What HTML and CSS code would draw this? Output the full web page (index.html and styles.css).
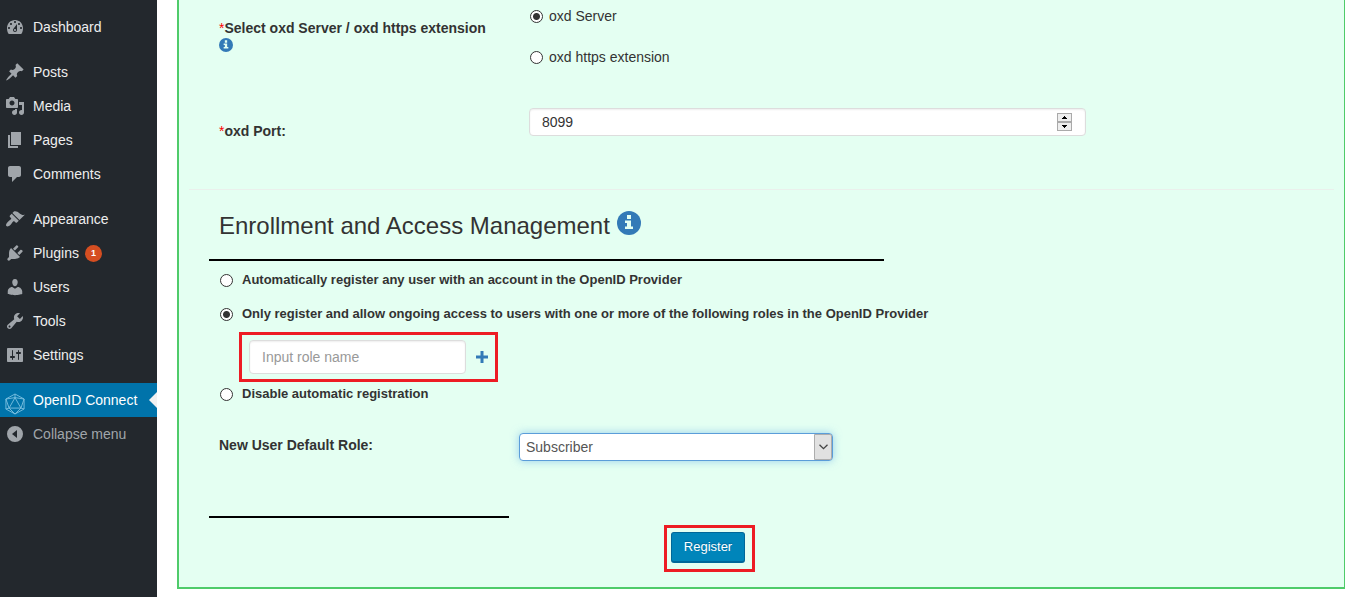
FILE: index.html
```html
<!DOCTYPE html>
<html lang="en">
<head>
<meta charset="utf-8">
<title>OpenID Connect</title>
<link rel="stylesheet" href="styles.css">
</head>
<body>
<svg class="defs" width="0" height="0" aria-hidden="true">
  <symbol id="info" viewBox="0 0 24 24">
    <circle cx="12" cy="12" r="12" fill="#337ab7"/>
    <path fill="#e4fff2" d="M10 4h4v4h-4zM8 9.500h6v6h2V18H8v-2.500h2V12H8z"/>
  </symbol>
</svg>
<div class="layout">
  <nav class="sidebar" aria-label="Admin menu">
    <ul class="menu">
      <li><a class="item" href="#"><svg class="icon" viewBox="0 0 20 20"><path d="M3.760 17h12.480c1.340-1.630 1.760-3.730 1.760-6 0-4.410-3.580-8-8-8s-8 3.590-8 8c0 2.270.42 4.370 1.760 6zM10 4c.55 0 1 .45 1 1s-.45 1-1 1-1-.45-1-1 .45-1 1-1zM6 6c.55 0 1 .45 1 1s-.45 1-1 1-1-.45-1-1 .45-1 1-1zm8 0c.55 0 1 .45 1 1s-.45 1-1 1-1-.45-1-1 .45-1 1-1zm-5.370 5.550L12 7v6c0 1.100-.9 2-2 2s-2-.9-2-2c0-.57.24-1.080.63-1.450zM4 10c.55 0 1 .45 1 1s-.45 1-1 1-1-.45-1-1 .45-1 1-1zm12 0c.55 0 1 .45 1 1s-.45 1-1 1-1-.45-1-1 .45-1 1-1zm-5 3c0-.55-.45-1-1-1s-1 .45-1 1 .45 1 1 1 1-.45 1-1z"/></svg>Dashboard</a></li>
      <li class="group"><a class="item" href="#"><svg class="icon" viewBox="0 0 20 20"><path d="M10.440 3.020l1.820-1.820 6.360 6.350-1.830 1.820c-1.050-.68-2.480-.57-3.410.36l-.75.75c-.92.93-1.040 2.350-.35 3.410l-1.830 1.820-2.410-2.410-2.800 2.790c-.42.42-3.380 2.710-3.800 2.290s1.860-3.390 2.280-3.810l2.790-2.790L4.100 9.360l1.830-1.820c1.050.69 2.480.57 3.400-.36l.75-.75c.93-.92 1.050-2.350.36-3.410z"/></svg>Posts</a></li>
      <li><a class="item" href="#"><svg class="icon" viewBox="0 0 20 20"><path d="M13 11V4c0-.55-.45-1-1-1h-1.670L9 1H5L3.670 3H2c-.55 0-1 .45-1 1v7c0 .55.45 1 1 1h10c.55 0 1-.45 1-1zM7 4.500c1.380 0 2.500 1.120 2.500 2.500S8.380 9.500 7 9.500 4.500 8.380 4.500 7 5.620 4.500 7 4.500zM14 6h5v10.500c0 1.380-1.120 2.500-2.500 2.500S14 17.880 14 16.500s1.120-2.500 2.500-2.500c.17 0 .34.02.5.05V9h-3V6zm-4 8.050V13h2v3.500c0 1.380-1.120 2.500-2.500 2.500S7 17.880 7 16.500 8.120 14 9.500 14c.17 0 .34.02.5.05z"/></svg>Media</a></li>
      <li><a class="item" href="#"><svg class="icon" viewBox="0 0 20 20"><path d="M6 15V2h10v13H6zm-1 1h8v2H3V5h2v11z"/></svg>Pages</a></li>
      <li><a class="item" href="#"><svg class="icon" viewBox="0 0 20 20"><path d="M5 2h9c1.100 0 2 .9 2 2v7c0 1.100-.9 2-2 2h-2l-5 5v-5H5c-1.100 0-2-.9-2-2V4c0-1.100.9-2 2-2z"/></svg>Comments</a></li>
      <li class="group"><a class="item" href="#"><svg class="icon" viewBox="0 0 20 20"><path d="M14.480 11.060L7.410 3.990l1.500-1.500c.5-.56 2.300-.47 3.510.32 1.210.8 1.430 1.280 2.910 2.100 1.180.64 2.450 1.260 4.450.85zm-.71.71L6.700 4.700 4.930 6.470c-.39.39-.39 1.020 0 1.410l1.060 1.060c.39.39.39 1.030 0 1.420-.6.6-1.430 1.110-2.210 1.690-.35.26-.7.53-1.010.84C1.430 14.230.4 16.080 1.400 17.070c.99 1 2.840-.03 4.180-1.360.31-.31.58-.66.85-1.020.57-.78 1.080-1.610 1.690-2.210.39-.39 1.020-.39 1.410 0l1.060 1.060c.39.39 1.020.39 1.410 0z"/></svg>Appearance</a></li>
      <li><a class="item" href="#"><svg class="icon" viewBox="0 0 20 20"><path d="M13.110 4.360L9.870 7.600 8 5.730l3.240-3.240c.35-.34 1.050-.2 1.560.32.52.51.66 1.210.31 1.550zm-8 1.770l.91-1.120 9.010 9.010-1.190.84c-.71.71-2.630 1.160-3.820 1.160H6.140L4.900 17.260c-.59.59-1.540.59-2.120 0-.59-.58-.59-1.530 0-2.120l1.240-1.240v-3.880c0-1.130.4-3.190 1.090-3.890zm7.260 3.970l3.240-3.240c.34-.35 1.040-.21 1.550.31.52.51.66 1.210.31 1.550l-3.240 3.250z"/></svg>Plugins<span class="count">1</span></a></li>
      <li><a class="item" href="#"><svg class="icon" viewBox="0 0 20 20"><path d="M10 9.250c-2.270 0-2.730-3.440-2.730-3.440C7 4.020 7.820 2 9.970 2c2.160 0 2.980 2.020 2.710 3.810 0 0-.41 3.440-2.680 3.440zm0 2.570L12.720 10c2.390 0 4.520 2.330 4.520 4.530v2.490s-3.650 1.130-7.240 1.130c-3.650 0-7.240-1.130-7.240-1.130v-2.490c0-2.250 1.940-4.480 4.470-4.480z"/></svg>Users</a></li>
      <li><a class="item" href="#"><svg class="icon" viewBox="0 0 20 20"><path d="M16.680 9.770c-1.340 1.340-3.300 1.670-4.950.99l-5.410 6.520c-.99.99-2.590.99-3.580 0s-.99-2.590 0-3.570l6.520-5.420c-.68-1.650-.35-3.610.99-4.950 1.280-1.280 3.120-1.620 4.720-1.060l-2.890 2.890 2.820 2.820 2.860-2.870c.53 1.580.18 3.390-1.080 4.650zM3.810 16.210c.4.39 1.040.39 1.430 0 .4-.4.4-1.040 0-1.430-.39-.4-1.030-.4-1.430 0-.39.39-.39 1.030 0 1.430z"/></svg>Tools</a></li>
      <li><a class="item" href="#"><svg class="icon" viewBox="0 0 20 20"><path d="M18 16V4c0-.55-.45-1-1-1H3c-.55 0-1 .45-1 1v12c0 .55.45 1 1 1h14c.55 0 1-.45 1-1zM8 11h1c.55 0 1 .45 1 1s-.45 1-1 1H8v1.500c0 .28-.22.5-.5.5s-.5-.22-.5-.5V13H6c-.55 0-1-.45-1-1s.45-1 1-1h1V5.500c0-.28.22-.5.5-.5s.5.22.5.5V11zm5-2h-1c-.55 0-1-.45-1-1s.45-1 1-1h1V5.500c0-.28.22-.5.5-.5s.5.22.5.5V7h1c.55 0 1 .45 1 1s-.45 1-1 1h-1v5.500c0 .28-.22.5-.5.5s-.5-.22-.5-.5V9z"/></svg>Settings</a></li>
      <li class="group"><a class="item current" href="#" aria-current="page"><svg class="icon brand" viewBox="0 0 22 24"><path d="M11 1 21 6.500v11L11 23 1 17.500v-11zM11 5 4.500 16.500h13zM11 1v4M1 6.500 11 5l10 1.500M1 6.500l3.500 10M21 6.500l-3.500 10M1 17.500l3.500-1L11 23l6.500-6.500 3.500 1"/></svg>OpenID Connect</a></li>
      <li><button class="item collapse" type="button"><svg class="icon" viewBox="0 0 20 20"><path fill-rule="evenodd" d="M10 2a8 8 0 1 1 0 16 8 8 0 0 1 0-16zM12 6 7 10l5 4z"/></svg>Collapse menu</button></li>
    </ul>
  </nav>
  <main class="main">
    <form class="panel">
      <div class="row server">
        <div class="label" id="server-label"><span class="req">*</span>Select oxd Server / oxd https extension <svg class="info small"><use href="#info"/></svg></div>
        <div class="choices" role="radiogroup" aria-labelledby="server-label">
          <label class="choice"><input class="radio" type="radio" name="server" checked>oxd Server</label>
          <label class="choice"><input class="radio" type="radio" name="server">oxd https extension</label>
        </div>
      </div>
      <div class="row port">
        <label class="label port-label" for="port"><span class="req">*</span>oxd Port:</label>
        <div class="number">
          <input class="number-input" id="port" type="number" value="8099">
          <span class="spinner">
            <button class="step" type="button" aria-label="Increase"><svg viewBox="0 0 5 3" width="5" height="3"><path d="M2 0h1v1h1v1h1v1H0V2h1V1h1z"/></svg></button>
            <button class="step" type="button" aria-label="Decrease"><svg viewBox="0 0 5 3" width="5" height="3"><path d="M0 0h5v1H4v1H3v1H2V2H1V1H0z"/></svg></button>
          </span>
        </div>
      </div>
      <hr class="divider">
      <section class="access">
        <h3 class="title">Enrollment and Access Management <svg class="info"><use href="#info"/></svg></h3>
        <div class="options">
          <label class="option"><input class="radio" type="radio" name="enroll">Automatically register any user with an account in the OpenID Provider</label>
          <label class="option"><input class="radio" type="radio" name="enroll" checked>Only register and allow ongoing access to users with one or more of the following roles in the OpenID Provider</label>
          <div class="role-box">
            <input class="role-input" type="text" placeholder="Input role name" aria-label="Role name">
            <button class="add" type="button" aria-label="Add role"><svg viewBox="0 0 12 12" width="12" height="12"><path fill="#337ab7" d="M4.500 0h3v4.500H12v3H7.500V12h-3V7.500H0v-3h4.500z"/></svg></button>
          </div>
          <label class="option last"><input class="radio" type="radio" name="enroll">Disable automatic registration</label>
        </div>
        <div class="default-role">
          <label class="label" for="role">New User Default Role:</label>
          <div class="select">
            <select class="select-input" id="role"><option>Subscriber</option></select>
            <span class="arrow"><svg viewBox="0 0 9 6" width="9" height="6"><path fill="none" stroke="#444" stroke-width="1.300" d="M.5.700l4 4 4-4"/></svg></span>
          </div>
        </div>
      </section>
      <div class="actions"><div class="highlight"><button class="submit" type="button">Register</button></div></div>
    </form>
  </main>
</div>
</body>
</html>
```
FILE: styles.css
```css
* { box-sizing: border-box; }
body {
  margin: 0;
  background: #fff;
  color: #333;
  font: 14px/20px "Liberation Sans", Arial, sans-serif;
}
button, input, select { font: inherit; color: inherit; margin: 0; }
.defs { display: block; }
.layout { display: flex; min-height: 100vh; }

.sidebar { flex: none; width: 157px; background: #23282d; }
.menu { list-style: none; margin: 0; padding: 10px 0 0; }
.group { margin-top: 11px; }
.item {
  position: relative;
  display: flex;
  align-items: center;
  width: 100%;
  height: 34px;
  padding: 0 0 0 5px;
  border: 0;
  background: none;
  color: #eee;
  text-decoration: none;
}
.icon { width: 20px; height: 20px; margin-right: 8px; fill: #a0a5aa; }
.count {
  width: 17px;
  height: 17px;
  margin-left: 6px;
  border-radius: 50%;
  background: #d54e21;
  color: #fff;
  font-size: 9px;
  font-weight: bold;
  line-height: 17px;
  text-align: center;
}
.current { background: #0073aa; color: #fff; }
.current::after {
  content: "";
  position: absolute;
  right: 0;
  top: 9px;
  border: 8px solid transparent;
  border-left: 0;
  border-right-color: #f1f1f1;
}
.brand { height: 24px; margin-top: 8px; fill: none; stroke: #7cc0e0; overflow: visible; }
.collapse { color: #a0a5aa; }

.main { flex: 1; padding: 0 0 8px 20px; }
.panel {
  padding: 6px 10px 15px;
  border: 2px solid #4fcb6a;
  border-width: 0 1px 2px 2px;
  background: #e4fff2;
}
.row { display: grid; grid-template-columns: 310px minmax(0, 557px); padding-left: 30px; }
.label { font-size: 14px; font-weight: bold; line-height: 16px; }
.server .label { padding: 14px 26px 0 0; }
.req { color: #f00; font-weight: normal; }
.info { width: 24px; height: 24px; }
.small { width: 14px; height: 14px; vertical-align: top; margin-top: 2px; }
.choices { display: flex; flex-direction: column; gap: 21px; }
.choice { display: flex; align-items: center; gap: 6px; padding-left: 1px; }
.radio {
  appearance: none;
  flex: none;
  width: 13px;
  height: 13px;
  border: 1px solid #333;
  border-radius: 50%;
  background: #fff;
}
.radio:checked { background: radial-gradient(circle, #333 3px, #fff 4px); }

.port { margin-top: 41px; }
.port-label { padding-top: 15px; }
.number {
  display: flex;
  align-items: center;
  height: 28px;
  padding: 0 13px 0 12px;
  border: 1px solid #ddd;
  border-radius: 4px;
  background: #fff;
  box-shadow: inset 0 1px 2px rgba(0, 0, 0, .07);
}
.number-input { flex: 1; min-width: 0; padding: 0; border: 0; outline: 0; background: none; appearance: textfield; }
.spinner { display: flex; flex-direction: column; width: 15px; }
.step {
  display: flex;
  align-items: center;
  justify-content: center;
  height: 9px;
  padding: 0;
  border: 1px solid #aaa;
  background: #eee;
}

.divider { margin: 50px 0 0; border: 0; border-top: 1px solid #eaf0ec; }
.access { padding-left: 20px; }
.title {
  width: 675px;
  max-width: 100%;
  margin: 0;
  padding: 20px 10px 17px;
  border-bottom: 2px solid #000;
  font-size: 24px;
  font-weight: normal;
  line-height: 32px;
}
.title .info { vertical-align: -1px; }
.options { display: flex; flex-direction: column; align-items: flex-start; padding: 9px 11px 0; }
.option { display: flex; align-items: center; gap: 9px; margin-bottom: 14px; font-size: 13px; font-weight: bold; }
.role-box {
  display: flex;
  align-items: center;
  gap: 10px;
  margin: -6px 0 2px 19px;
  padding: 5px 7px;
  border: 3px solid #ed1c24;
}
.role-input {
  width: 217px;
  height: 34px;
  padding: 0 12px;
  border: 1px solid #ddd;
  border-radius: 4px;
  background: #fff;
  box-shadow: inset 0 1px 2px rgba(0, 0, 0, .07);
}
.role-input::placeholder { color: #999; }
.add { display: flex; padding: 0; border: 0; background: none; }
.last { margin-bottom: 0; }
.default-role {
  display: grid;
  grid-template-columns: 300px 314px;
  padding: 29px 0 55px 10px;
}
.default-role .label { padding-top: 4px; }
.select {
  display: grid;
  grid-template-columns: 1fr 18px;
  height: 28px;
  border: 1px solid #5b9dd9;
  border-radius: 4px;
  background: #fff;
  box-shadow: 0 0 8px rgba(102, 175, 233, .6);
}
.select-input {
  grid-area: 1 / 1 / 2 / 3;
  appearance: none;
  padding: 0 24px 0 6px;
  border: 0;
  outline: 0;
  background: none;
  color: #555;
}
.arrow {
  grid-area: 1 / 2;
  display: grid;
  place-items: center;
  border: 1px solid #adadad;
  border-radius: 0 2px 2px 0;
  background: #e1e1e1;
  pointer-events: none;
}
.access::after { content: ""; display: block; width: 300px; border-bottom: 2px solid #000; }
.actions { display: flex; padding: 7px 0 0 475px; }
.highlight { padding: 4px 7px 6px 4px; border: 3px solid #ed1c24; }
.submit {
  width: 74px;
  height: 31px;
  padding: 0;
  border: 1px solid #006799;
  border-bottom-width: 2px;
  border-radius: 3px;
  background: #0085ba;
  color: #fff;
  font-size: 13px;
  text-shadow: 0 -1px 1px #006799;
}
```
